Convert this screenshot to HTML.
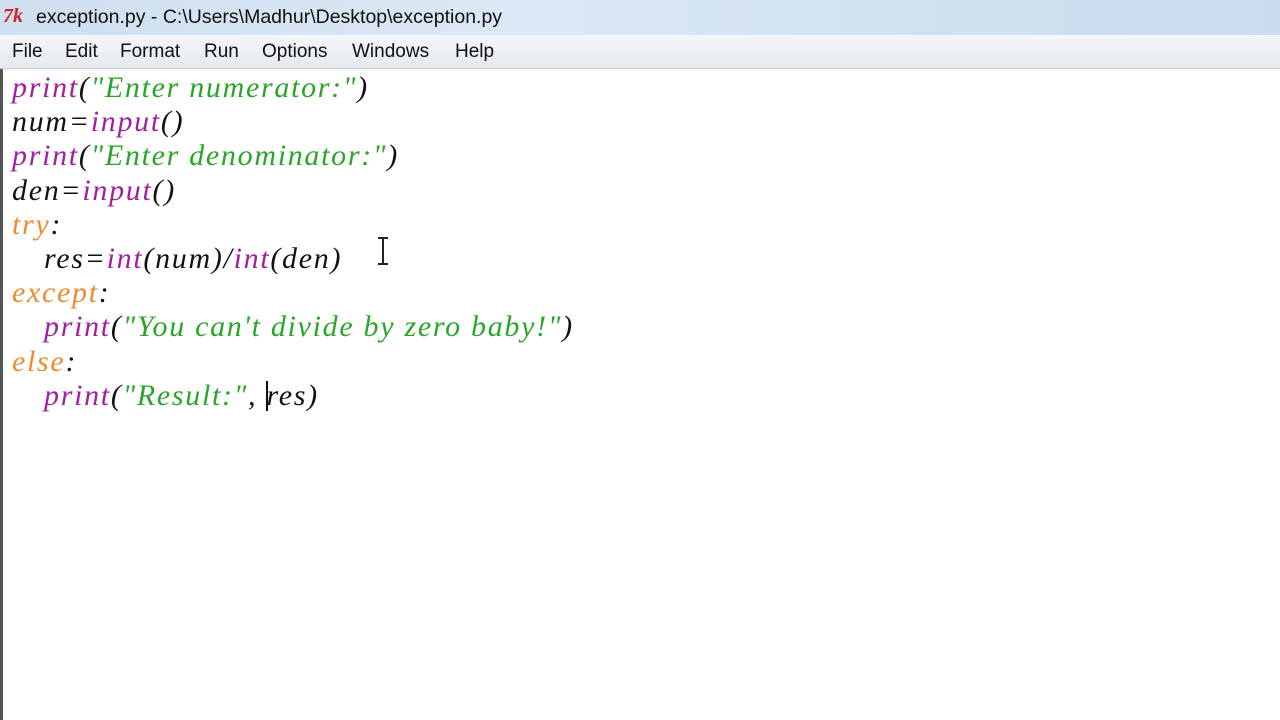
<!DOCTYPE html>
<html><head><style>
body{margin:0;width:1280px;height:720px;overflow:hidden;background:#fff;position:relative;font-family:"Liberation Sans",sans-serif}
.title{position:absolute;left:0;top:0;width:1280px;height:35px;background:linear-gradient(90deg,#cfdff0,#dbe8f5 40%,#c9dbee);}
.tt{position:absolute;left:36px;top:6px;font-size:19.5px;color:#111}
.logo{position:absolute;left:3px;top:5px;font:italic bold 20px "Liberation Serif",serif;color:#d2232a}
.menu{position:absolute;left:0;top:35px;width:1280px;height:33px;background:linear-gradient(#f4f6f9,#e6eaf0);border-bottom:1px solid #c8ccd2}
.menu span{position:absolute;top:6px;font-size:19px;color:#111}
.lb{position:absolute;left:0;top:69px;width:3px;height:651px;background:#555}
.code{position:absolute;left:12px;top:71px;font:italic 30px/34.2px "Liberation Serif",serif;letter-spacing:1.7px;color:#111;white-space:pre}
.code div{height:34.2px}
.in{padding-left:32px}
.k{color:#a020a0}.s{color:#2aa52a}.o{color:#f08a30}
</style></head><body>
<div class="title"><span class="logo">7k</span><span class="tt">exception.py - C:\Users\Madhur\Desktop\exception.py</span></div>
<div class="menu"><span style="left:12px">File</span><span style="left:65px">Edit</span><span style="left:120px">Format</span><span style="left:204px">Run</span><span style="left:262px">Options</span><span style="left:352px">Windows</span><span style="left:455px">Help</span></div>
<div class="lb"></div>
<div class="code"><div><span class="k">print</span>(<span class="s">"Enter numerator:"</span>)</div><div>num=<span class="k">input</span>()</div><div><span class="k">print</span>(<span class="s">"Enter denominator:"</span>)</div><div>den=<span class="k">input</span>()</div><div><span class="o">try</span>:</div><div class="in">res=<span class="k">int</span>(num)/<span class="k">int</span>(den)</div><div><span class="o">except</span>:</div><div class="in"><span class="k">print</span>(<span class="s">"You can't divide by zero baby!"</span>)</div><div><span class="o">else</span>:</div><div class="in"><span class="k">print</span>(<span class="s">"Result:"</span>, res)</div></div>
<div style="position:absolute;left:266px;top:381px;width:2px;height:30px;background:#111"></div>
<svg style="position:absolute;left:376px;top:236px" width="14" height="30"><path d="M2 2h10M7 2v26M2 28h10" stroke="#222" stroke-width="2" fill="none"/></svg>
</body></html>
